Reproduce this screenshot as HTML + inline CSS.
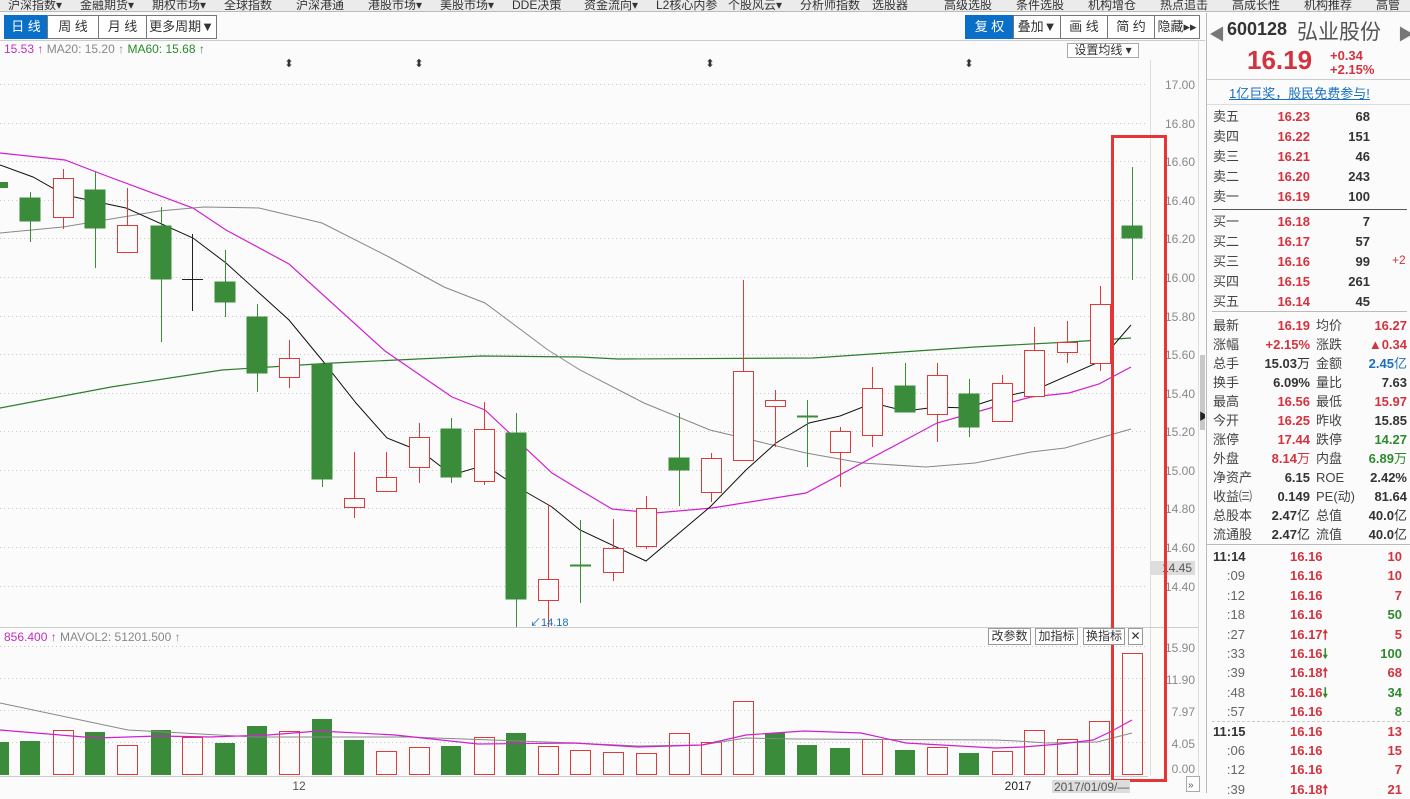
<!DOCTYPE html>
<html><head><meta charset="utf-8"><style>
*{margin:0;padding:0;box-sizing:border-box}
body{width:1410px;height:793px;overflow:hidden;background:#fbfbfb;font-family:"Liberation Sans","Noto Sans CJK SC",sans-serif;position:relative;color:#333}
.abs{position:absolute;white-space:nowrap}
#menu{position:absolute;left:0;top:0;width:1410px;height:12px;background:#ebebeb;border-bottom:1px solid #bbb;overflow:hidden}
#menu span{position:absolute;top:-4px;font-size:12px;color:#333}
.btn{position:absolute;top:15px;height:24px;border:1px solid #777;background:#fff;font-size:13px;line-height:22px;text-align:center;color:#333;white-space:nowrap;overflow:hidden}
.blue{background:#0a6fc7;color:#fff;border-color:#0a6fc7}
.r{color:#d3333f}.g{color:#2d8a2d}.b{color:#1a6fc0}
.ob{position:absolute;font-size:13px;font-weight:bold;white-space:nowrap}
.lb{position:absolute;font-size:13px;color:#444;white-space:nowrap}
.n{font-weight:normal}
</style></head><body>
<div id="menu">
<span style="left:8px">沪深指数▾</span><span style="left:80px">金融期货▾</span><span style="left:152px">期权市场▾</span><span style="left:224px">全球指数</span><span style="left:296px">沪深港通</span><span style="left:368px">港股市场▾</span><span style="left:440px">美股市场▾</span><span style="left:512px">DDE决策</span><span style="left:584px">资金流向▾</span><span style="left:656px">L2核心内参</span><span style="left:728px">个股风云▾</span><span style="left:800px">分析师指数</span><span style="left:872px">选股器</span><span style="left:944px">高级选股</span><span style="left:1016px">条件选股</span><span style="left:1088px">机构增仓</span><span style="left:1160px">热点追击</span><span style="left:1232px">高成长性</span><span style="left:1304px">机构推荐</span><span style="left:1376px">高管增</span>
</div>
<div class="btn blue" style="left:4px;width:44px;">日 线</div>
<div class="btn" style="left:47px;width:52px;">周 线</div>
<div class="btn" style="left:98px;width:49px;">月 线</div>
<div class="btn" style="left:146px;width:71px;">更多周期▼</div>
<div class="btn blue" style="left:965px;width:49px;">复 权</div>
<div class="btn" style="left:1013px;width:48px;">叠加▼</div>
<div class="btn" style="left:1060px;width:48px;">画 线</div>
<div class="btn" style="left:1107px;width:48px;">简 约</div>
<div class="btn" style="left:1154px;width:46px;">隐藏▸▸</div>
<div class="abs" style="left:0;top:40px;width:1205px;height:1px;background:#ccc"></div>
<div class="abs" style="left:4px;top:42px;font-size:12px"><span style="color:#c030c0">15.53 ↑</span> <span style="color:#888">MA20: 15.20 ↑</span> <span style="color:#2a8a2a">MA60: 15.68 ↑</span></div>
<div class="abs" style="left:1067px;top:43px;width:72px;height:15px;border:1px solid #aaa;background:#fff;font-size:12px;line-height:13px;text-align:center">设置均线 ▾</div>

<svg class="abs" style="left:0;top:0" width="1205" height="793">
<g stroke="#c9c9c9" stroke-dasharray="1,3" stroke-width="1">
<line x1="0" x2="1148" y1="84.5" y2="84.5"/><line x1="0" x2="1148" y1="123.5" y2="123.5"/><line x1="0" x2="1148" y1="161.5" y2="161.5"/><line x1="0" x2="1148" y1="200.5" y2="200.5"/><line x1="0" x2="1148" y1="238.5" y2="238.5"/><line x1="0" x2="1148" y1="277.5" y2="277.5"/><line x1="0" x2="1148" y1="316.5" y2="316.5"/><line x1="0" x2="1148" y1="354.5" y2="354.5"/><line x1="0" x2="1148" y1="393.5" y2="393.5"/><line x1="0" x2="1148" y1="431.5" y2="431.5"/><line x1="0" x2="1148" y1="470.5" y2="470.5"/><line x1="0" x2="1148" y1="508.5" y2="508.5"/><line x1="0" x2="1148" y1="547.5" y2="547.5"/><line x1="0" x2="1148" y1="586.5" y2="586.5"/>
<line x1="0" x2="1148" y1="646.5" y2="646.5"/><line x1="0" x2="1148" y1="678.5" y2="678.5"/><line x1="0" x2="1148" y1="710.5" y2="710.5"/><line x1="0" x2="1148" y1="742.5" y2="742.5"/>
</g>
<line x1="1150.5" y1="60" x2="1150.5" y2="776" stroke="#ddd"/>
<line x1="1198.5" y1="40" x2="1198.5" y2="776" stroke="#ddd"/>
<line x1="0" y1="627.5" x2="1198" y2="627.5" stroke="#ccc"/>
<line x1="0" y1="776.5" x2="1148" y2="776.5" stroke="#ccc"/>
<g font-size="12" fill="#888" text-anchor="end" font-family="Liberation Sans">
<text x="1195" y="89">17.00</text><text x="1195" y="128">16.80</text><text x="1195" y="166">16.60</text><text x="1195" y="205">16.40</text><text x="1195" y="243">16.20</text><text x="1195" y="282">16.00</text><text x="1195" y="321">15.80</text><text x="1195" y="359">15.60</text><text x="1195" y="398">15.40</text><text x="1195" y="436">15.20</text><text x="1195" y="475">15.00</text><text x="1195" y="513">14.80</text><text x="1195" y="552">14.60</text><text x="1195" y="591">14.40</text>
<text x="1195" y="652">15.90</text><text x="1195" y="684">11.90</text><text x="1195" y="716">7.97</text><text x="1195" y="748">4.05</text><text x="1195" y="773">0.00</text>
</g>
<rect x="1150" y="561" width="45" height="14" fill="#ddd"/>
<text x="1192" y="572" font-size="12" fill="#555" text-anchor="end">14.45</text>
<g font-size="11" fill="#333" text-anchor="middle"><text x="289" y="67">⬍</text><text x="419" y="67">⬍</text><text x="710" y="67">⬍</text><text x="969" y="67">⬍</text></g>

<polyline fill="none" stroke="#2e7d2e" stroke-width="1.2" points="0,408 111,387 222,370 333,363 481,356 580,357 618,359 813,358 975,347 1069,342 1131,338"/>
<polyline fill="none" stroke="#888" stroke-width="1" points="0,233 63,227 159,211 204,207 259,208 322,223 389,257 444,287 485,303 548,350 580,370 644,403 710,430 806,453 862,463 926,467 975,463 1031,452 1065,448 1131,429"/>
<polyline fill="none" stroke="#d020d0" stroke-width="1.2" points="0,153 65,160 104,175 193,208 226,230 289,264 385,351 452,397 485,410 552,473 580,490 612,509 655,513 712,508 806,493 937,423 994,407 1031,397 1069,393 1099,384 1131,367"/>
<polyline fill="none" stroke="#111" stroke-width="1" points="0,165 33,177 65,195 126,208 193,238 226,263 289,320 322,360 356,403 387,438 422,452 452,475 485,465 519,488 552,507 580,530 646,561 710,507 746,470 776,443 809,423 840,416 873,403 905,411 937,407 967,408 1001,397 1035,390 1099,362 1131,325"/>

<g stroke-width="1">
<rect x="-2" y="182" width="10" height="6" fill="#3a8c3a"/>
<g stroke="#3a8c3a" fill="#3a8c3a">
<line x1="30.5" y1="192" x2="30.5" y2="242"/><rect x="20" y="198" width="20" height="23"/>
<line x1="95.5" y1="172" x2="95.5" y2="268"/><rect x="85" y="190" width="20" height="38"/>
<line x1="161.5" y1="207" x2="161.5" y2="342"/><rect x="151" y="226" width="20" height="53"/>
<line x1="225.5" y1="250" x2="225.5" y2="317"/><rect x="215" y="282" width="20" height="20"/>
<line x1="257.5" y1="304" x2="257.5" y2="392"/><rect x="247" y="317" width="20" height="56"/>
<line x1="322.5" y1="364" x2="322.5" y2="487"/><rect x="312" y="364" width="20" height="115"/>
<line x1="451.5" y1="418" x2="451.5" y2="483"/><rect x="441" y="429" width="20" height="48"/>
<line x1="516.5" y1="413" x2="516.5" y2="627"/><rect x="506" y="433" width="20" height="166"/>
<line x1="580.5" y1="520" x2="580.5" y2="603"/><line x1="570" y1="565.5" x2="591" y2="565.5" stroke-width="2"/>
<line x1="679.5" y1="413" x2="679.5" y2="506"/><rect x="669" y="458" width="20" height="12"/>
<line x1="807.5" y1="400" x2="807.5" y2="467"/><line x1="797" y1="416.5" x2="818" y2="416.5" stroke-width="2"/>
<line x1="905.5" y1="363" x2="905.5" y2="412"/><rect x="895" y="386" width="20" height="26"/>
<line x1="969.5" y1="379" x2="969.5" y2="437"/><rect x="959" y="394" width="20" height="33"/>
<line x1="1132.5" y1="167" x2="1132.5" y2="280"/><rect x="1122" y="226" width="20" height="12"/>
</g>
<g stroke="#222"><line x1="192.5" y1="234" x2="192.5" y2="311"/><line x1="182" y1="279.5" x2="203" y2="279.5"/></g>
<g stroke="#dd3a3a" fill="#fbfbfb">
<line x1="63.5" y1="169" x2="63.5" y2="229"/><rect x="53.5" y="178.5" width="20" height="39"/>
<line x1="127.5" y1="188" x2="127.5" y2="252"/><rect x="117.5" y="225.5" width="20" height="27"/>
<line x1="289.5" y1="340" x2="289.5" y2="388"/><rect x="279.5" y="358.5" width="20" height="19"/>
<line x1="354.5" y1="452" x2="354.5" y2="518"/><rect x="344.5" y="498.5" width="20" height="9"/>
<line x1="386.5" y1="452" x2="386.5" y2="491"/><rect x="376.5" y="477.5" width="20" height="14"/>
<line x1="419.5" y1="423" x2="419.5" y2="483"/><rect x="409.5" y="437.5" width="20" height="30"/>
<line x1="484.5" y1="402" x2="484.5" y2="485"/><rect x="474.5" y="429.5" width="20" height="52"/>
<line x1="548.5" y1="505" x2="548.5" y2="627"/><rect x="538.5" y="579.5" width="20" height="21"/>
<line x1="613.5" y1="519" x2="613.5" y2="581"/><rect x="603.5" y="548.5" width="20" height="24"/>
<line x1="646.5" y1="496" x2="646.5" y2="549"/><rect x="636.5" y="508.5" width="20" height="38"/>
<line x1="711.5" y1="453" x2="711.5" y2="502"/><rect x="701.5" y="458.5" width="20" height="34"/>
<line x1="743.5" y1="280" x2="743.5" y2="460"/><rect x="733.5" y="371.5" width="20" height="89"/>
<line x1="775.5" y1="390" x2="775.5" y2="447"/><rect x="765.5" y="400.5" width="20" height="6"/>
<line x1="840.5" y1="427" x2="840.5" y2="487"/><rect x="830.5" y="431.5" width="20" height="21"/>
<line x1="872.5" y1="367" x2="872.5" y2="447"/><rect x="862.5" y="388.5" width="20" height="47"/>
<line x1="937.5" y1="363" x2="937.5" y2="442"/><rect x="927.5" y="375.5" width="20" height="39"/>
<line x1="1002.5" y1="375" x2="1002.5" y2="421"/><rect x="992.5" y="383.5" width="20" height="38"/>
<line x1="1034.5" y1="327" x2="1034.5" y2="396"/><rect x="1024.5" y="350.5" width="20" height="46"/>
<line x1="1067.5" y1="321" x2="1067.5" y2="363"/><rect x="1057.5" y="342.5" width="20" height="10"/>
<line x1="1100.5" y1="286" x2="1100.5" y2="371"/><rect x="1090.5" y="304.5" width="20" height="59"/>
</g>
</g>
<text x="530" y="626" font-size="11" fill="#1a6fc0">↙14.18</text>

<g fill="#3a8c3a">
<rect x="-2" y="742" width="11" height="33"/><rect x="20" y="741" width="20" height="34"/><rect x="85" y="732" width="20" height="43"/><rect x="151" y="730" width="20" height="45"/><rect x="215" y="743" width="20" height="32"/><rect x="247" y="726" width="20" height="49"/><rect x="312" y="719" width="20" height="56"/><rect x="344" y="740" width="20" height="35"/><rect x="441" y="746" width="20" height="29"/><rect x="506" y="733" width="20" height="42"/><rect x="765" y="733" width="20" height="42"/><rect x="797" y="745" width="20" height="30"/><rect x="830" y="748" width="20" height="27"/><rect x="895" y="750" width="20" height="25"/><rect x="959" y="753" width="20" height="22"/>
</g>
<g fill="none" stroke="#dd3a3a">
<rect x="53.5" y="730.5" width="20" height="44"/><rect x="117.5" y="745.5" width="20" height="29"/><rect x="182.5" y="737.5" width="20" height="37"/><rect x="279.5" y="731.5" width="20" height="43"/><rect x="376.5" y="751.5" width="20" height="23"/><rect x="409.5" y="747.5" width="20" height="27"/><rect x="474.5" y="737.5" width="20" height="37"/><rect x="538.5" y="746.5" width="20" height="28"/><rect x="570.5" y="750.5" width="20" height="24"/><rect x="603.5" y="752.5" width="20" height="22"/><rect x="636.5" y="753.5" width="20" height="21"/><rect x="669.5" y="733.5" width="20" height="41"/><rect x="701.5" y="742.5" width="20" height="32"/><rect x="733.5" y="701.5" width="20" height="73"/><rect x="862.5" y="739.5" width="20" height="35"/><rect x="927.5" y="747.5" width="20" height="27"/><rect x="992.5" y="751.5" width="20" height="23"/><rect x="1024.5" y="730.5" width="20" height="44"/><rect x="1057.5" y="739.5" width="20" height="35"/><rect x="1089.5" y="721.5" width="20" height="53"/><rect x="1122.5" y="653.5" width="20" height="121"/>
</g>
<polyline fill="none" stroke="#888" points="0,703 128,730 255,737 408,737 574,743 638,746 702,745 746,738 797,739 995,740 1017,741 1047,743 1097,742 1132,733"/>
<polyline fill="none" stroke="#d020d0" stroke-width="1.2" points="0,730 96,738 159,736 210,737 268,735 319,731 395,735 478,744 574,743 638,747 702,745 746,735 804,731 861,733 906,743 995,748 1023,747 1060,744 1093,740 1110,732 1132,720"/>
<rect x="1112.5" y="136.5" width="53" height="644" fill="none" stroke="#e53535" stroke-width="3"/>
<text x="4" y="641" font-size="12"><tspan fill="#c030c0">856.400 ↑</tspan><tspan fill="#888"> MAVOL2: 51201.500 ↑</tspan></text>
<text x="299" y="790" font-size="12" fill="#555" text-anchor="middle">12</text>
<text x="1018" y="790" font-size="12" fill="#222" text-anchor="middle">2017</text>
<rect x="1052" y="780" width="78" height="13" fill="#ddd"/>
<text x="1054" y="791" font-size="12" fill="#555">2017/01/09/—</text>
<rect x="1186.5" y="776.5" width="13" height="15" fill="#fff" stroke="#aaa"/>
<text x="1188" y="788" font-size="10" fill="#555">»</text>
<rect x="1200" y="355" width="5" height="75" fill="#c8c8c8"/>
<text x="1199" y="420" font-size="10" fill="#222">▶</text>
</svg>
<div class="abs" style="left:988px;top:628px;width:43px;height:17px;border:1px solid #999;background:#fff;font-size:12px;text-align:center;line-height:15px">改参数</div>
<div class="abs" style="left:1035px;top:628px;width:43px;height:17px;border:1px solid #999;background:#fff;font-size:12px;text-align:center;line-height:15px">加指标</div>
<div class="abs" style="left:1083px;top:628px;width:42px;height:17px;border:1px solid #999;background:#fff;font-size:12px;text-align:center;line-height:15px">换指标</div>
<div class="abs" style="left:1128px;top:628px;width:15px;height:17px;border:1px solid #999;background:#fff;font-size:12px;text-align:center;line-height:15px">✕</div>

<div class="abs" style="left:1206px;top:13px;width:1px;height:780px;background:#bbb"></div>
<div class="abs" style="left:1209px;top:21px;font-size:16px;color:#777">◀</div>
<div class="abs" style="left:1227px;top:19px;font-size:18px;font-weight:bold;color:#333">600128</div>
<div class="abs" style="left:1297px;top:16px;font-size:21px;color:#555">弘业股份</div>
<div class="abs" style="left:1398px;top:21px;font-size:16px;color:#777">▶</div>
<div class="abs r" style="left:1247px;top:45px;font-size:26px;font-weight:bold">16.19</div>
<div class="abs r" style="left:1330px;top:49px;font-size:13px;font-weight:bold;line-height:14px">+0.34<br>+2.15%</div>
<div class="abs" style="left:1207px;top:79px;width:203px;height:1px;background:#ccc"></div>
<div class="abs b" style="left:1229px;top:83px;font-size:13px;text-decoration:underline">1亿巨奖，股民免费参与!</div>
<div class="abs" style="left:1207px;top:104px;width:203px;height:1px;background:#ddd"></div>
<div class="abs" style="left:1212px;top:209px;width:195px;height:1px;background:#555"></div>
<div class="abs" style="left:1212px;top:311px;width:195px;height:1px;background:#bbb"></div>
<div class="abs" style="left:1207px;top:544px;width:203px;height:1px;background:#bbb"></div>
<div class="abs" style="left:1212px;top:721px;width:198px;border-top:1px dashed #ccc"></div>

<div class="lb" style="left:1213px;top:107px;line-height:20px">卖五<br>卖四<br>卖三<br>卖二<br>卖一</div>
<div class="ob r" style="left:1270px;top:107px;width:40px;text-align:right;line-height:20px">16.23<br>16.22<br>16.21<br>16.20<br>16.19</div>
<div class="ob" style="left:1330px;top:107px;width:40px;text-align:right;line-height:20px;color:#333">68<br>151<br>46<br>243<br>100</div>
<div class="lb" style="left:1213px;top:212px;line-height:20px">买一<br>买二<br>买三<br>买四<br>买五</div>
<div class="ob r" style="left:1270px;top:212px;width:40px;text-align:right;line-height:20px">16.18<br>16.17<br>16.16<br>16.15<br>16.14</div>
<div class="ob" style="left:1330px;top:212px;width:40px;text-align:right;line-height:20px;color:#333">7<br>57<br>99<br>261<br>45</div>
<div class="abs r" style="left:1392px;top:253px;font-size:12px">+2</div>

<div class="lb" style="left:1213px;top:316px;line-height:19px">最新<br>涨幅<br>总手<br>换手<br>最高<br>今开<br>涨停<br>外盘<br>净资产<br>收益㈢<br>总股本<br>流通股</div>
<div class="ob" style="left:1250px;top:316px;width:60px;text-align:right;line-height:19px;color:#333"><span class="r">16.19</span><br><span class="r">+2.15%</span><br>15.03<span class="n">万</span><br>6.09%<br><span class="r">16.56</span><br><span class="r">16.25</span><br><span class="r">17.44</span><br><span class="r">8.14<span class="n">万</span></span><br>6.15<br>0.149<br>2.47<span class="n">亿</span><br>2.47<span class="n">亿</span></div>
<div class="lb" style="left:1316px;top:316px;line-height:19px">均价<br>涨跌<br>金额<br>量比<br>最低<br>昨收<br>跌停<br>内盘<br>ROE<br>PE(动)<br>总值<br>流值</div>
<div class="ob" style="left:1347px;top:316px;width:60px;text-align:right;line-height:19px;color:#333"><span class="r">16.27</span><br><span class="r">▲0.34</span><br><span class="b">2.45<span class="n">亿</span></span><br>7.63<br><span class="r">15.97</span><br>15.85<br><span class="g">14.27</span><br><span class="g">6.89<span class="n">万</span></span><br>2.42%<br>81.64<br>40.0<span class="n">亿</span><br>40.0<span class="n">亿</span></div>

<div class="abs" style="left:1213px;top:547px;font-size:13px;line-height:19.4px;width:32px;text-align:right;color:#666"><b style="color:#333">11:14</b><br>:09<br>:12<br>:18<br>:27<br>:33<br>:39<br>:48<br>:57<br><b style="color:#333">11:15</b><br>:06<br>:12<br>:39</div>
<div class="ob r" style="left:1290px;top:547px;line-height:19.4px">16.16<br>16.16<br>16.16<br>16.16<br>16.17🠕<br>16.16<span class="g">🠗</span><br>16.18🠕<br>16.16<span class="g">🠗</span><br>16.16<br>16.16<br>16.16<br>16.16<br>16.18🠕</div>
<div class="ob" style="left:1360px;top:547px;width:42px;text-align:right;line-height:19.4px"><span class="r">10</span><br><span class="r">10</span><br><span class="r">7</span><br><span class="g">50</span><br><span class="r">5</span><br><span class="g">100</span><br><span class="r">68</span><br><span class="g">34</span><br><span class="g">8</span><br><span class="r">13</span><br><span class="r">15</span><br><span class="r">7</span><br><span class="r">21</span></div>
</body></html>
